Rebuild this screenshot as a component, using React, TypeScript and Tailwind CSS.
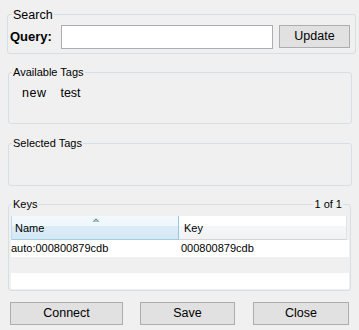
import React from "react";

function Group({
  label,
  className,
  children,
  right,
}: {
  label: string;
  className: string;
  children?: React.ReactNode;
  right?: string;
}) {
  return (
    <div className={"relative border border-[#d5dfe5] rounded-[3px] " + className}>
      <span className="absolute left-[3px] top-[-7px] px-[1px] bg-[#f0f0f0] text-[11px] leading-[13px] text-[#000]">
        {label}
      </span>
      {right && (
        <span className="absolute right-[7px] top-[-7px] px-[1px] bg-[#f0f0f0] text-[11px] leading-[13px] text-[#000]">
          {right}
        </span>
      )}
      {children}
    </div>
  );
}

export default function App() {
  return (
    <div className="w-[359px] h-[330px] bg-[#f0f0f0] overflow-hidden flex flex-col font-['Liberation_Sans',Arial,sans-serif] text-black">
      {/* Search */}
      <div className="relative ml-[7px] mt-[14px] w-[349px] h-[40px] border border-[#d5dfe5] rounded-[3px] flex items-start pt-[10px] pl-[2px]">
        <span className="absolute left-[4px] top-[-8px] px-[1px] bg-[#f0f0f0] text-[12.5px] leading-[16px]">
          Search
        </span>
        <div className="w-[51px] h-[24px] flex items-center font-bold text-[13px]">Query:</div>
        <div className="w-[212px] h-[24px] border border-[#abadb3] bg-white" />
        <button className="ml-[6px] w-[71px] h-[23px] border border-[#adadad] bg-[#e1e1e1] text-[12.5px] leading-[21px] text-center">
          Update
        </button>
      </div>

      {/* Available Tags */}
      <Group label="Available Tags" className="ml-[8px] mt-[18px] w-[344px] h-[52px]">
        <div className="flex pt-[12px] pl-[13px] gap-[14px] text-[12.5px] leading-[16px]">
          <span className="tracking-[0.5px]">new</span>
          <span>test</span>
        </div>
      </Group>

      {/* Selected Tags */}
      <Group label="Selected Tags" className="ml-[8px] mt-[19px] w-[344px] h-[43px]" />

      {/* Keys */}
      <Group label="Keys" right="1 of 1" className="ml-[8px] mt-[18px] w-[343px] h-[87px]">
        <div className="pt-[11px] pl-[2px] text-[11px]">
          <div className="w-[338px] flex flex-col">
            <div className="flex h-[24px]">
              <div className="relative w-[168px] h-[24px] border-l border-r border-b border-l-[#c0dcee] border-r-[#96c6e2] border-b-[#a6cbe2] bg-[linear-gradient(to_bottom,#f3f9fd_0%,#eef7fc_42%,#dcedf8_42%,#d4e8f5_100%)] pl-[3px] pt-[6px] leading-[13px]">
                <svg className="absolute left-[80px] top-[2px]" width="8" height="4" viewBox="0 0 8 4">
                  <path d="M0.5 3.8 L4 0.3 L7.5 3.8 Z" fill="#6e8fab" />
                  <path d="M2 3.8 L4 1.8 L6 3.8 Z" fill="#b7cde0" />
                </svg>
                Name
              </div>
              <div className="w-[168px] h-[24px] border-r border-b border-r-[#e3e4e6] border-b-[#d5d5d5] bg-[linear-gradient(to_bottom,#ffffff_0%,#ffffff_42%,#f6f7f8_42%,#f1f2f3_100%)] pl-[5px] pt-[6px] leading-[13px]">
                Key
              </div>
              <div className="w-[2px] h-[24px] bg-[#f0f0f0]" />
            </div>
            <div className="flex h-[17px] bg-white leading-[17px]">
              <div className="w-[168px]">auto:000800879cdb</div>
              <div className="pl-[2px]">000800879cdb</div>
            </div>
            <div className="h-[16px] bg-[#f0f0f0]" />
            <div className="h-[16px] bg-white" />
          </div>
        </div>
      </Group>

      {/* Buttons */}
      <div className="flex mt-[11px] pl-[10px] text-[12.5px]">
        <button className="w-[113px] h-[23px] border border-[#adadad] bg-[#e1e1e1] leading-[21px] text-center">
          Connect
        </button>
        <button className="ml-[17px] w-[95px] h-[23px] border border-[#adadad] bg-[#e1e1e1] leading-[21px] text-center">
          Save
        </button>
        <button className="ml-[18px] w-[96px] h-[23px] border border-[#adadad] bg-[#e1e1e1] leading-[21px] text-center">
          Close
        </button>
      </div>
    </div>
  );
}
